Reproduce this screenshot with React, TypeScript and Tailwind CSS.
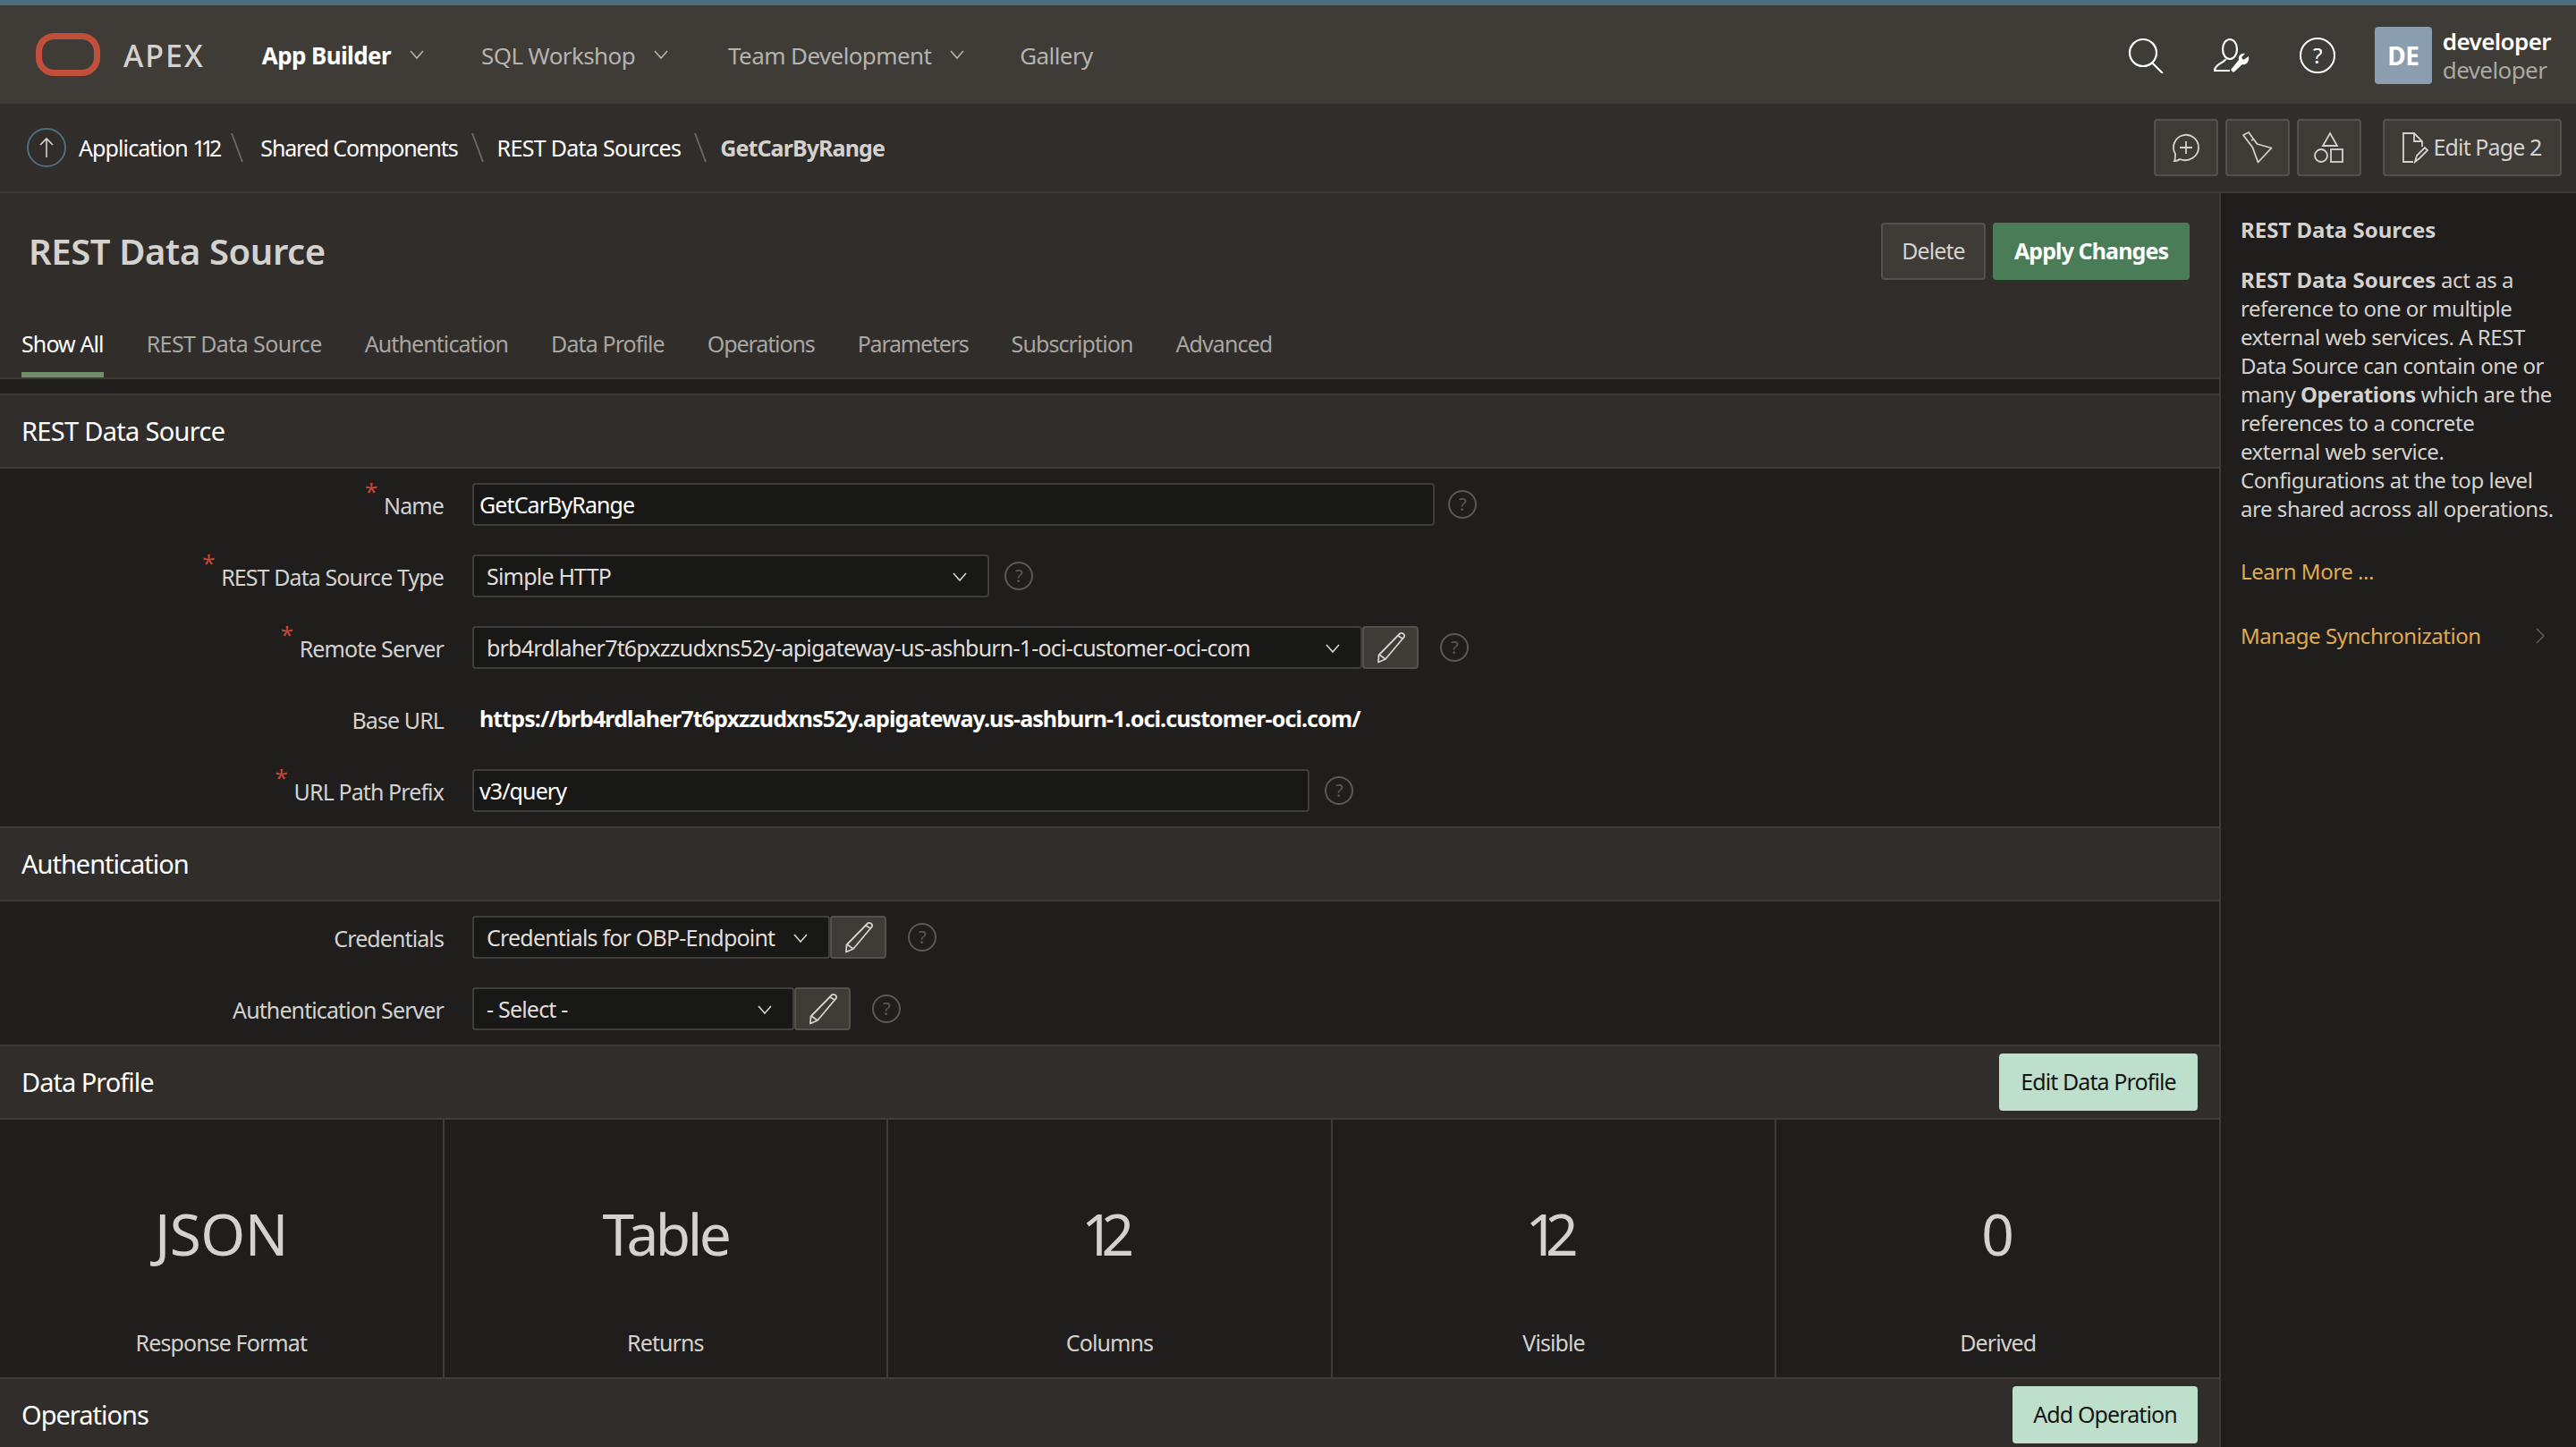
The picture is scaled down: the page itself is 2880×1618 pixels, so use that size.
import React from "react";

const Chevron = ({ className = "" }: { className?: string }) => (
  <svg viewBox="0 0 18 12" className={`w-[18px] h-[12px] ${className}`} fill="none" stroke="currentColor" strokeWidth="1.6">
    <path d="M2 2l7 8 7-8" />
  </svg>
);

const Help = ({ className = "" }: { className?: string }) => (
  <span className={`w-[32px] h-[32px] rounded-full border-2 border-[#5c5955] text-[#5c5955] flex items-center justify-center text-[20px] leading-none shrink-0 ${className}`}>?</span>
);

const Pencil = () => (
  <button className="w-[63px] h-[48px] bg-[#3f3c37] border-2 border-[#55524e] rounded-[4px] flex items-center justify-center text-[#d4d2cf] shrink-0">
    <svg viewBox="0 0 34 36" className="w-[34px] h-[36px]" fill="none" stroke="currentColor" strokeWidth="1.8" strokeLinejoin="round">
      <path d="M27 2.5c2-1.5 6 .5 5 3.5L11 31l-8 3.5 .5-8z" />
      <path d="M25 5l6 3.5M4 26l7 5" />
    </svg>
  </button>
);

const Req = () => <span className="absolute left-[-21px] top-[-14px] text-[#c74634] text-[26px] leading-none">*</span>;

const Label = ({ text, req }: { text: string; req?: boolean }) => (
  <div className="w-[496px] shrink-0 flex justify-end mr-[32px] text-[#d4d2cf]">
    <span className="relative leading-[30px] mt-[1px]">
      {req && <Req />}
      {text}
    </span>
  </div>
);

const Input = ({ w, value }: { w: string; value: string }) => (
  <div className={`${w} h-[48px] bg-[#181816] border-2 border-[#403e3a] rounded-[4px] px-[6px] pt-[1px] flex items-center text-white shrink-0`}>{value}</div>
);

const Select = ({ w, value }: { w: string; value: string }) => (
  <div className={`${w} h-[48px] bg-[#181816] border-2 border-[#403e3a] rounded-[4px] pl-[14px] pr-[22px] pt-[1px] flex items-center justify-between text-[#e0dedb] tracking-[-0.8px] shrink-0`}>
    <span>{value}</span>
    <Chevron className="text-[#d4d2cf]" />
  </div>
);

const Section = ({ title, children, track = "tracking-[-1px]" }: { title: string; children?: React.ReactNode; track?: string }) => (
  <div className={`h-[84px] bg-[#312d2a] border-b-2 border-[#3f3c37] border-t-2 border-t-[#3f3c37] pl-[24px] pr-[24px] flex items-center justify-between shrink-0`}>
    <h2 className={`text-[29px] text-white ${track}`}>{title}</h2>
    {children}
  </div>
);

const Stat = ({ big, small, last, track }: { big: string; small: string; last?: boolean; track: string }) => (
  <div className={`flex-1 flex flex-col items-center ${last ? "" : "border-r-2 border-[#3f3c37]"}`}>
    <div className={`text-[64px] leading-[80px] mt-[88px] text-[#d4d2cf] ${track}`}>{big}</div>
    <div className="leading-[30px] mt-[66px] text-[#d4d2cf]">{small}</div>
  </div>
);

const NavItem = ({ text, active, chevron = true, className = "" }: { text: string; active?: boolean; chevron?: boolean; className?: string }) => (
  <div className={`flex items-center ${className} ${active ? "text-white font-bold" : "text-[#b5b3af]"}`}>
    <span>{text}</span>
    {chevron && <Chevron className="ml-[20px] mt-[-2px] text-[#b5b3af]" />}
  </div>
);

const ToolBtn = ({ children }: { children: React.ReactNode }) => (
  <button className="w-[72px] h-[64px] bg-[#3f3c37] border-2 border-[#55524e] rounded-[4px] flex items-center justify-center text-[#d4d2cf]">{children}</button>
);

const Slash = () => (
  <svg viewBox="0 0 14 34" className="w-[14px] h-[34px] mx-[15px] text-[#6b6863]" fill="none" stroke="currentColor" strokeWidth="2"><path d="M1 1l12 32" /></svg>
);

const Tab = ({ text, active, track = "" }: { text: string; active?: boolean; track?: string }) => (
  <div className={`relative h-[76px] flex items-center pt-[2px] ${track} ${active ? "text-white" : "text-[#a8a6a2]"}`}>
    {text}
    {active && <span className="absolute left-0 right-0 bottom-0 h-[6px] bg-[#6f9066]" />}
  </div>
);

export default function App() {
  return (
    <div className="w-[2880px] h-[1618px] overflow-hidden flex flex-col bg-[#1f1e1c] text-[25px] tracking-[-0.9px]" style={{ fontFamily: '"Noto Sans", sans-serif' }}>
      <div className="h-[6px] bg-[#4c6f7e] shrink-0" />
      <header className="h-[110px] bg-[#3f3c37] flex items-center pl-[40px] pr-[16px] pt-[2px] shrink-0 text-[26px] tracking-[-0.6px]">
        <svg viewBox="0 0 72 48" className="w-[72px] h-[48px] mt-[-2px]" fill="none" stroke="#c24f3b" strokeWidth="7"><rect x="3.5" y="3.5" width="65" height="41" rx="17" /></svg>
        <span className="ml-[26px] text-[34px] font-medium text-[#d4d2cf] tracking-[2px]">APEX</span>
        <NavItem text="App Builder" active className="ml-[64px]" />
        <NavItem text="SQL Workshop" className="ml-[63px]" />
        <NavItem text="Team Development" className="ml-[66px]" />
        <NavItem text="Gallery" chevron={false} className="ml-[61px]" />
        <div className="ml-auto flex items-center text-white">
          <svg viewBox="0 0 40 40" className="w-[40px] h-[40px]" fill="none" stroke="currentColor" strokeWidth="2.2"><circle cx="17" cy="17" r="15" /><path d="M27 28l12 12" /></svg>
          <svg viewBox="0 0 40 40" className="w-[40px] h-[40px] ml-[56px]" fill="none" stroke="currentColor" strokeWidth="2.2">
            <ellipse cx="18" cy="13" rx="8" ry="11" />
            <path d="M13 24c0 4-12 5-12 13h17" />
            <path d="M39 21l-6 4-2-3 4-4c-4-1-8 2-7 7L19 36l3 3 10-9c5 1 8-4 7-9z" fill="currentColor" stroke="none" />
          </svg>
          <span className="w-[40px] h-[40px] ml-[56px] rounded-full border-2 border-white flex items-center justify-center text-[24px]">?</span>
          <div className="w-[64px] h-[64px] ml-[44px] rounded-[4px] bg-[#8b9eb0] flex items-center justify-center text-white font-bold text-[28px]">DE</div>
          <div className="ml-[12px] mr-[12px] leading-[32px]">
            <div className="font-semibold text-white">developer</div>
            <div className="text-[#aaa8a4]">developer</div>
          </div>
        </div>
      </header>
      <div className="h-[100px] bg-[#312d2a] border-b-2 border-[#3f3c37] flex items-center pl-[30px] pr-[16px] shrink-0 text-white">
        <span className="w-[44px] h-[44px] rounded-full border-2 border-[#4c6f7e] flex items-center justify-center mr-[14px] text-[#d4d2cf]">
          <svg viewBox="0 0 20 24" className="w-[20px] h-[24px]" fill="none" stroke="currentColor" strokeWidth="1.6"><path d="M10 23V2M3 9l7-7 7 7" /></svg>
        </span>
        <span className="mt-[2px]">Application <span className="tracking-[-5px]">112</span></span><Slash />
        <span className="mt-[2px] ml-[4px] tracking-[-1.15px]">Shared Components</span><Slash />
        <span className="mt-[2px] tracking-[-0.7px]">REST Data Sources</span><Slash />
        <span className="mt-[2px] font-bold text-[#d4d2cf]">GetCarByRange</span>
        <div className="ml-auto flex items-center gap-[8px]">
          <ToolBtn>
            <svg viewBox="0 0 34 34" className="w-[34px] h-[34px]" fill="none" stroke="currentColor" strokeWidth="1.8"><path d="M4 32c3 0 5-1 6-2 10 4 21-3 21-13A14 14 0 1 0 5 24c0 3 0 6-1 8z" /><path d="M17 10v14M10 17h14" /></svg>
          </ToolBtn>
          <ToolBtn>
            <svg viewBox="0 0 34 36" className="w-[34px] h-[36px]" fill="none" stroke="currentColor" strokeWidth="1.8" strokeLinejoin="round"><path d="M1 4l6-3 9.500 13 16 4.500L17.500 34.500l-6-16.500z" /><path d="M10 10l2-1" /></svg>
          </ToolBtn>
          <ToolBtn>
            <svg viewBox="0 0 34 36" className="w-[34px] h-[36px]" fill="none" stroke="currentColor" strokeWidth="1.8"><path d="M18 2l8 14H10z" /><circle cx="8" cy="27" r="7" /><rect x="19" y="20" width="13" height="14" /></svg>
          </ToolBtn>
          <button className="ml-[16px] w-[200px] h-[64px] bg-[#3f3c37] border-2 border-[#55524e] rounded-[4px] flex items-center justify-center text-[#d4d2cf]">
            <svg viewBox="0 0 30 36" className="w-[30px] h-[36px] mr-[6px] ml-[-2px]" fill="none" stroke="currentColor" strokeWidth="1.8"><path d="M13 34H2V2h12l9 9v6M14 2v9h9" /><path d="M15 34l2-7 9-9 3 3-9 9z" /></svg>
            Edit Page 2
          </button>
        </div>
      </div>
      <div className="flex flex-1 min-h-0">
        <main className="w-[2481px] border-r-2 border-[#3f3c37] shrink-0 flex flex-col box-content">
          <div className="bg-[#312d2a] h-[208px] border-b-2 border-[#3f3c37] shrink-0 flex flex-col">
            <div className="h-[130px] pl-[32px] pr-[33px] flex items-center justify-between">
              <h1 className="text-[40px] font-semibold text-[#d4d2cf] tracking-[-0.4px]">REST Data Source</h1>
              <div className="flex gap-[8px]">
                <button className="w-[117px] h-[64px] bg-[#3f3c37] border-2 border-[#55524e] rounded-[4px] text-[#d4d2cf]">Delete</button>
                <button className="w-[220px] h-[64px] bg-[#4a7d57] rounded-[4px] text-white font-bold">Apply Changes</button>
              </div>
            </div>
            <div className="flex gap-[48px] pl-[24px]">
              <Tab text="Show All" active />
              <Tab text="REST Data Source" track="tracking-[-0.6px]" />
              <Tab text="Authentication" />
              <Tab text="Data Profile" />
              <Tab text="Operations" track="tracking-[-1.1px]" />
              <Tab text="Parameters" track="tracking-[-1.2px]" />
              <Tab text="Subscription" />
              <Tab text="Advanced" />
            </div>
          </div>
          <div className="h-[16px] shrink-0" />
          <Section title="REST Data Source" track="tracking-[-0.7px]" />
          <div className="h-[400px] pt-[16px] shrink-0 flex flex-col">
            <div className="flex items-center h-[48px] mb-[32px]"><Label text="Name" req /><Input w="w-[1076px]" value="GetCarByRange" /><Help className="ml-[15px]" /></div>
            <div className="flex items-center h-[48px] mb-[32px]"><Label text="REST Data Source Type" req /><Select w="w-[578px]" value="Simple HTTP" /><Help className="ml-[17px]" /></div>
            <div className="flex items-center h-[48px] mb-[32px]"><Label text="Remote Server" req /><Select w="w-[995px]" value="brb4rdlaher7t6pxzzudxns52y-apigateway-us-ashburn-1-oci-customer-oci-com" /><Pencil /><Help className="ml-[24px]" /></div>
            <div className="flex items-center h-[48px] mb-[32px]"><Label text="Base URL" /><span className="ml-[8px] font-bold text-white">https://brb4rdlaher7t6pxzzudxns52y.apigateway.us-ashburn-1.oci.customer-oci.com/</span></div>
            <div className="flex items-center h-[48px]"><Label text="URL Path Prefix" req /><Input w="w-[936px]" value="v3/query" /><Help className="ml-[17px]" /></div>
          </div>
          <Section title="Authentication" />
          <div className="h-[160px] pt-[16px] shrink-0 flex flex-col">
            <div className="flex items-center h-[48px] mb-[32px]"><Label text="Credentials" /><Select w="w-[400px]" value="Credentials for OBP-Endpoint" /><Pencil /><Help className="ml-[24px]" /></div>
            <div className="flex items-center h-[48px]"><Label text="Authentication Server" /><Select w="w-[360px]" value="- Select -" /><Pencil /><Help className="ml-[24px]" /></div>
          </div>
          <Section title="Data Profile">
            <button className="w-[222px] h-[64px] bg-[#bddfcb] rounded-[4px] text-[#161513]">Edit Data Profile</button>
          </Section>
          <div className="h-[288px] flex shrink-0">
            <Stat big="JSON" small="Response Format" track="tracking-[-0.6px]" />
            <Stat big="Table" small="Returns" track="tracking-[-3.5px]" />
            <Stat big="12" small="Columns" track="tracking-[-14px] mr-[18px]" />
            <Stat big="12" small="Visible" track="tracking-[-14px] mr-[18px]" />
            <Stat big="0" small="Derived" last track="tracking-[0px]" />
          </div>
          <Section title="Operations">
            <button className="w-[207px] h-[64px] bg-[#bddfcb] rounded-[4px] text-[#161513]">Add Operation</button>
          </Section>
        </main>
        <aside className="flex-1 pl-[22px] pr-[22px] pt-[25px] text-[24px] leading-[32px] tracking-[-0.45px] text-[#d4d2cf]">
          <div className="font-bold tracking-[0px]">REST Data Sources</div>
          <p className="mt-[24px]">
            <b className="tracking-[0px]">REST Data Sources</b> act as a reference to one or multiple external web services. A REST Data Source can contain one or many <b>Operations</b> which are the references to a concrete external web service. Configurations at the top level are shared across all operations.
          </p>
          <div className="mt-[38px] text-[#e0aa52]">Learn More ...</div>
          <div className="mt-[40px] flex items-center justify-between text-[#e0aa52] pr-[12px]">
            <span>Manage Synchronization</span>
            <svg viewBox="0 0 12 20" className="w-[12px] h-[20px] text-[#5c5955]" fill="none" stroke="currentColor" strokeWidth="1.6"><path d="M2 2l8 8-8 8" /></svg>
          </div>
        </aside>
      </div>
    </div>
  );
}
